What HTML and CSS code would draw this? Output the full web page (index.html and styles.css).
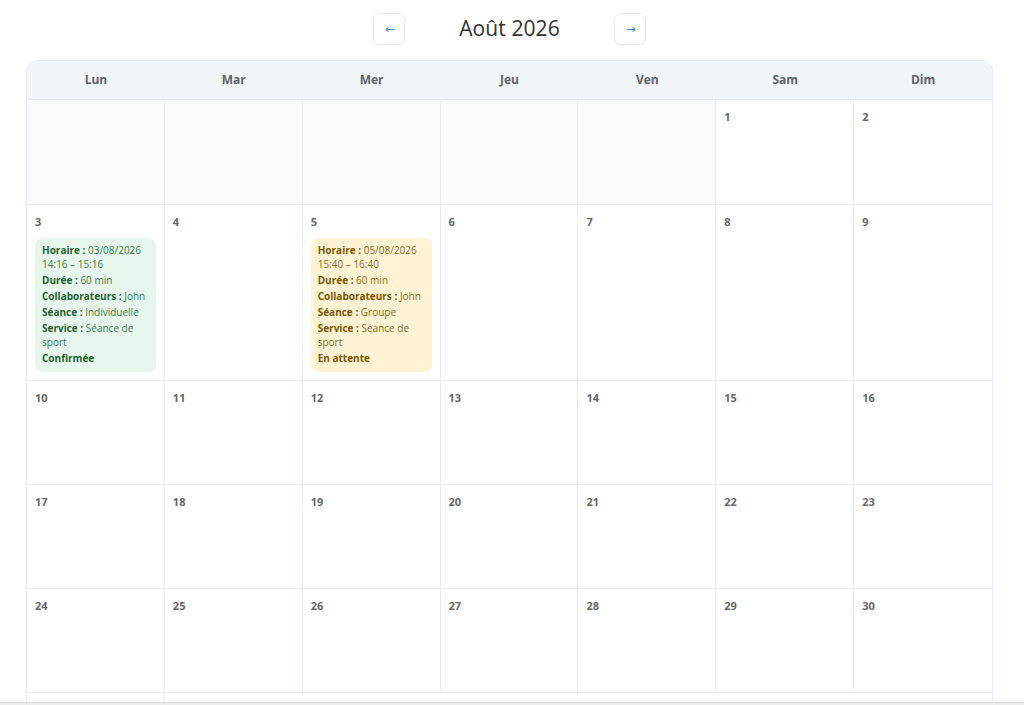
FILE: index.html
```html
<!DOCTYPE html>
<html lang="fr">
<head>
<meta charset="utf-8">
<title>Calendrier</title>
<link rel="stylesheet" href="styles.css">
</head>
<body>
<div class="page">
  <div class="toolbar">
    <button class="nav-btn">←</button>
    <h1 class="month">Août 2026</h1>
    <button class="nav-btn">→</button>
  </div>
  <div class="calendar">
    <div class="head">Lun</div>
    <div class="head">Mar</div>
    <div class="head">Mer</div>
    <div class="head">Jeu</div>
    <div class="head">Ven</div>
    <div class="head">Sam</div>
    <div class="head">Dim</div>

    <div class="cell empty first"></div>
    <div class="cell empty first"></div>
    <div class="cell empty first"></div>
    <div class="cell empty first"></div>
    <div class="cell empty first"></div>
    <div class="cell first"><span class="num">1</span></div>
    <div class="cell first"><span class="num">2</span></div>

    <div class="cell"><span class="num">3</span>
      <div class="event ok">
        <p><b>Horaire :</b> 03/08/2026 14:16 – 15:16</p>
        <p><b>Durée :</b> 60 min</p>
        <p><b>Collaborateurs :</b> John</p>
        <p><b>Séance :</b> Individuelle</p>
        <p><b>Service :</b> Séance de sport</p>
        <p><b>Confirmée</b></p>
      </div>
    </div>
    <div class="cell"><span class="num">4</span></div>
    <div class="cell"><span class="num">5</span>
      <div class="event wait">
        <p><b>Horaire :</b> 05/08/2026 15:40 – 16:40</p>
        <p><b>Durée :</b> 60 min</p>
        <p><b>Collaborateurs :</b> John</p>
        <p><b>Séance :</b> Groupe</p>
        <p><b>Service :</b> Séance de sport</p>
        <p><b>En attente</b></p>
      </div>
    </div>
    <div class="cell"><span class="num">6</span></div>
    <div class="cell"><span class="num">7</span></div>
    <div class="cell"><span class="num">8</span></div>
    <div class="cell"><span class="num">9</span></div>

    <div class="cell"><span class="num">10</span></div>
    <div class="cell"><span class="num">11</span></div>
    <div class="cell"><span class="num">12</span></div>
    <div class="cell"><span class="num">13</span></div>
    <div class="cell"><span class="num">14</span></div>
    <div class="cell"><span class="num">15</span></div>
    <div class="cell"><span class="num">16</span></div>

    <div class="cell"><span class="num">17</span></div>
    <div class="cell"><span class="num">18</span></div>
    <div class="cell"><span class="num">19</span></div>
    <div class="cell"><span class="num">20</span></div>
    <div class="cell"><span class="num">21</span></div>
    <div class="cell"><span class="num">22</span></div>
    <div class="cell"><span class="num">23</span></div>

    <div class="cell"><span class="num">24</span></div>
    <div class="cell"><span class="num">25</span></div>
    <div class="cell"><span class="num">26</span></div>
    <div class="cell"><span class="num">27</span></div>
    <div class="cell"><span class="num">28</span></div>
    <div class="cell"><span class="num">29</span></div>
    <div class="cell"><span class="num">30</span></div>

    <div class="cell"><span class="num">31</span></div>
  </div>
</div>
<div class="bottom-bar"></div>
</body>
</html>
```

FILE: styles.css
```css
* { box-sizing: border-box; }
html, body {
  margin: 0;
  padding: 0;
  background: #ffffff;
  font-family: "Open Sans", "Noto Sans", "Liberation Sans", sans-serif;
  color: #444;
}
.page {
  padding: 13px 31px 0 26px;
}
.toolbar {
  display: flex;
  align-items: center;
  justify-content: center;
  gap: 54px;
  height: 32px;
  margin-bottom: 15px;
}
.nav-btn {
  width: 32px;
  height: 32px;
  border: 1px solid #e6ecf1;
  border-radius: 7px;
  background: #fff;
  color: #3a86c8;
  font-family: "DejaVu Sans", sans-serif;
  font-size: 12px;
  line-height: 1;
  padding: 0 0 0 2px;
  box-shadow: 0 1px 2px rgba(0,0,0,0.04);
}
.month {
  margin: 0 0 2px 0;
  font-size: 21px;
  font-weight: 400;
  color: #333;
  letter-spacing: 0.1px;
}
.calendar {
  display: grid;
  grid-template-columns: repeat(7, 1fr);
  width: 967px;
  border: 1px solid #e6ecf1;
  border-bottom: none;
  border-radius: 12px 12px 0 0;
  overflow: hidden;
}
.head {
  height: 39px;
  background: #f0f5fa;
  border-bottom: 1px solid #e6ecf1;
  display: flex;
  align-items: center;
  justify-content: center;
  padding-bottom: 2px;
  font-size: 12px;
  font-weight: 700;
  color: #5f6368;
}
.cell {
  min-height: 104px;
  border-right: 1px solid #e8edf1;
  border-bottom: 1px solid #e8edf1;
  padding: 9px 8px 8px 8px;
  background: #fff;
}
.cell.first { min-height: 105px; }
.cell:nth-child(7n) { border-right: none; }
.cell.empty { background: #f8fafc; }
.num {
  display: block;
  font-size: 11px;
  font-weight: 700;
  color: #666;
  line-height: 16px;
}
.event {
  margin-top: 8px;
  border-radius: 8px;
  padding: 5px 7px 7px 7px;
  font-size: 10px;
  line-height: 14px;
}
.event p {
  margin: 0 0 2px 0;
}
.event p:last-child { margin-bottom: 0; }
.event.ok {
  background: #e7f6ec;
  color: #3a7a4c;
}
.event.ok b { color: #1f6130; }
.event.wait {
  background: #fff3d4;
  color: #8a6a1a;
}
.event.wait b { color: #7a5700; }
.bottom-bar {
  position: fixed;
  left: 0;
  right: 0;
  bottom: 0;
  height: 3px;
  background: #eeeeee;
  border-top: 1px solid #d9d9d9;
}
```
